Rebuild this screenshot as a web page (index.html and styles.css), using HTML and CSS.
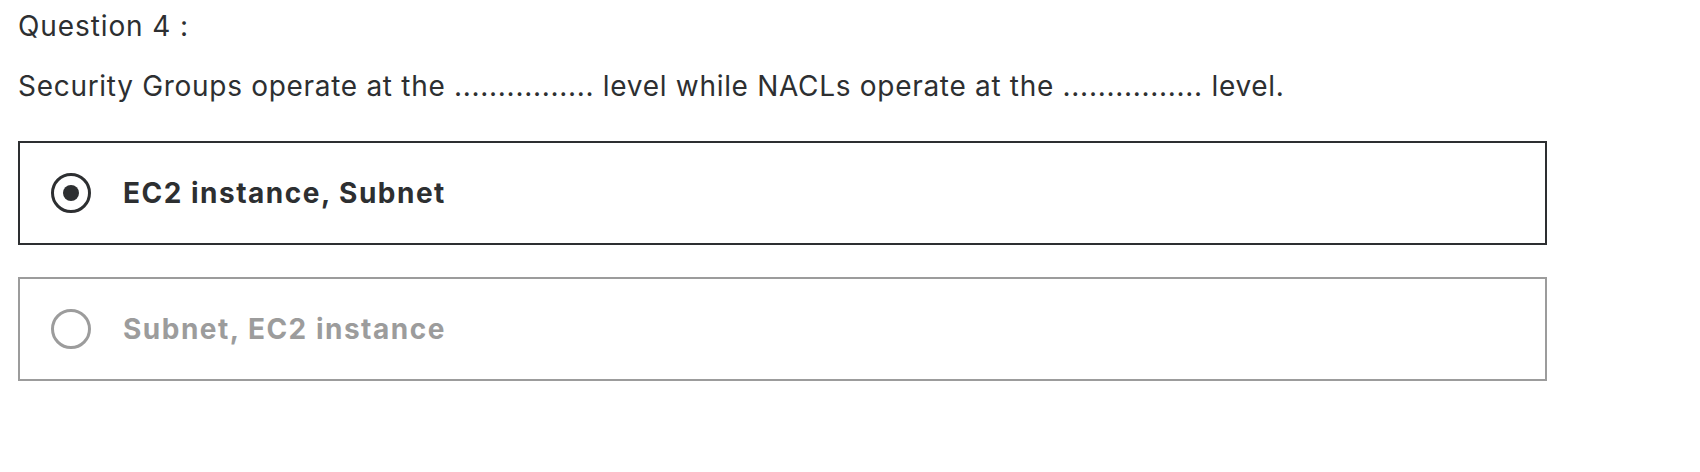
FILE: index.html
```html
<!DOCTYPE html>
<html>
<head>
<meta charset="utf-8">
<link rel="stylesheet" href="styles.css">
</head>
<body>
<div class="quiz">
  <div class="q-title">Question 4 :</div>
  <div class="q-text">Security Groups operate at the ................ level while NACLs operate at the ................ level.</div>
  <div class="options">
    <label class="option selected">
      <span class="radio"><span class="dot"></span></span>
      <span class="label">EC2 instance, Subnet</span>
    </label>
    <label class="option muted">
      <span class="radio"></span>
      <span class="label">Subnet, EC2 instance</span>
    </label>
  </div>
</div>
</body>
</html>
```
FILE: styles.css
```css
html, body { margin: 0; padding: 0; background: #fff; }
body {
  font-family: Inter, "Liberation Sans", sans-serif;
  color: #2d2f31;
}
.quiz {
  width: 1529px;
  padding: 6px 0 0 18px;
}
.q-title {
  font-size: 28px;
  line-height: 40px;
  letter-spacing: 0.9px;
}
.q-text {
  font-size: 28px;
  line-height: 40px;
  letter-spacing: 0.7px;
  margin-top: 20px;
}
.options {
  display: flex;
  flex-direction: column;
  gap: 32px;
  margin-top: 35px;
}
.option {
  display: flex;
  align-items: center;
  height: 104px;
  box-sizing: border-box;
  border: 2px solid #2d2f31;
  padding-left: 31px;
  gap: 32px;
}
.option.muted {
  border-color: #9c9c9c;
  color: #9c9c9c;
}
.radio {
  width: 40px;
  height: 40px;
  box-sizing: border-box;
  border: 3.5px solid currentColor;
  border-radius: 50%;
  display: flex;
  align-items: center;
  justify-content: center;
}
.dot {
  width: 16px;
  height: 16px;
  border-radius: 50%;
  background: currentColor;
}
.label {
  font-size: 28px;
  font-weight: 700;
  letter-spacing: 1.5px;
}
```
